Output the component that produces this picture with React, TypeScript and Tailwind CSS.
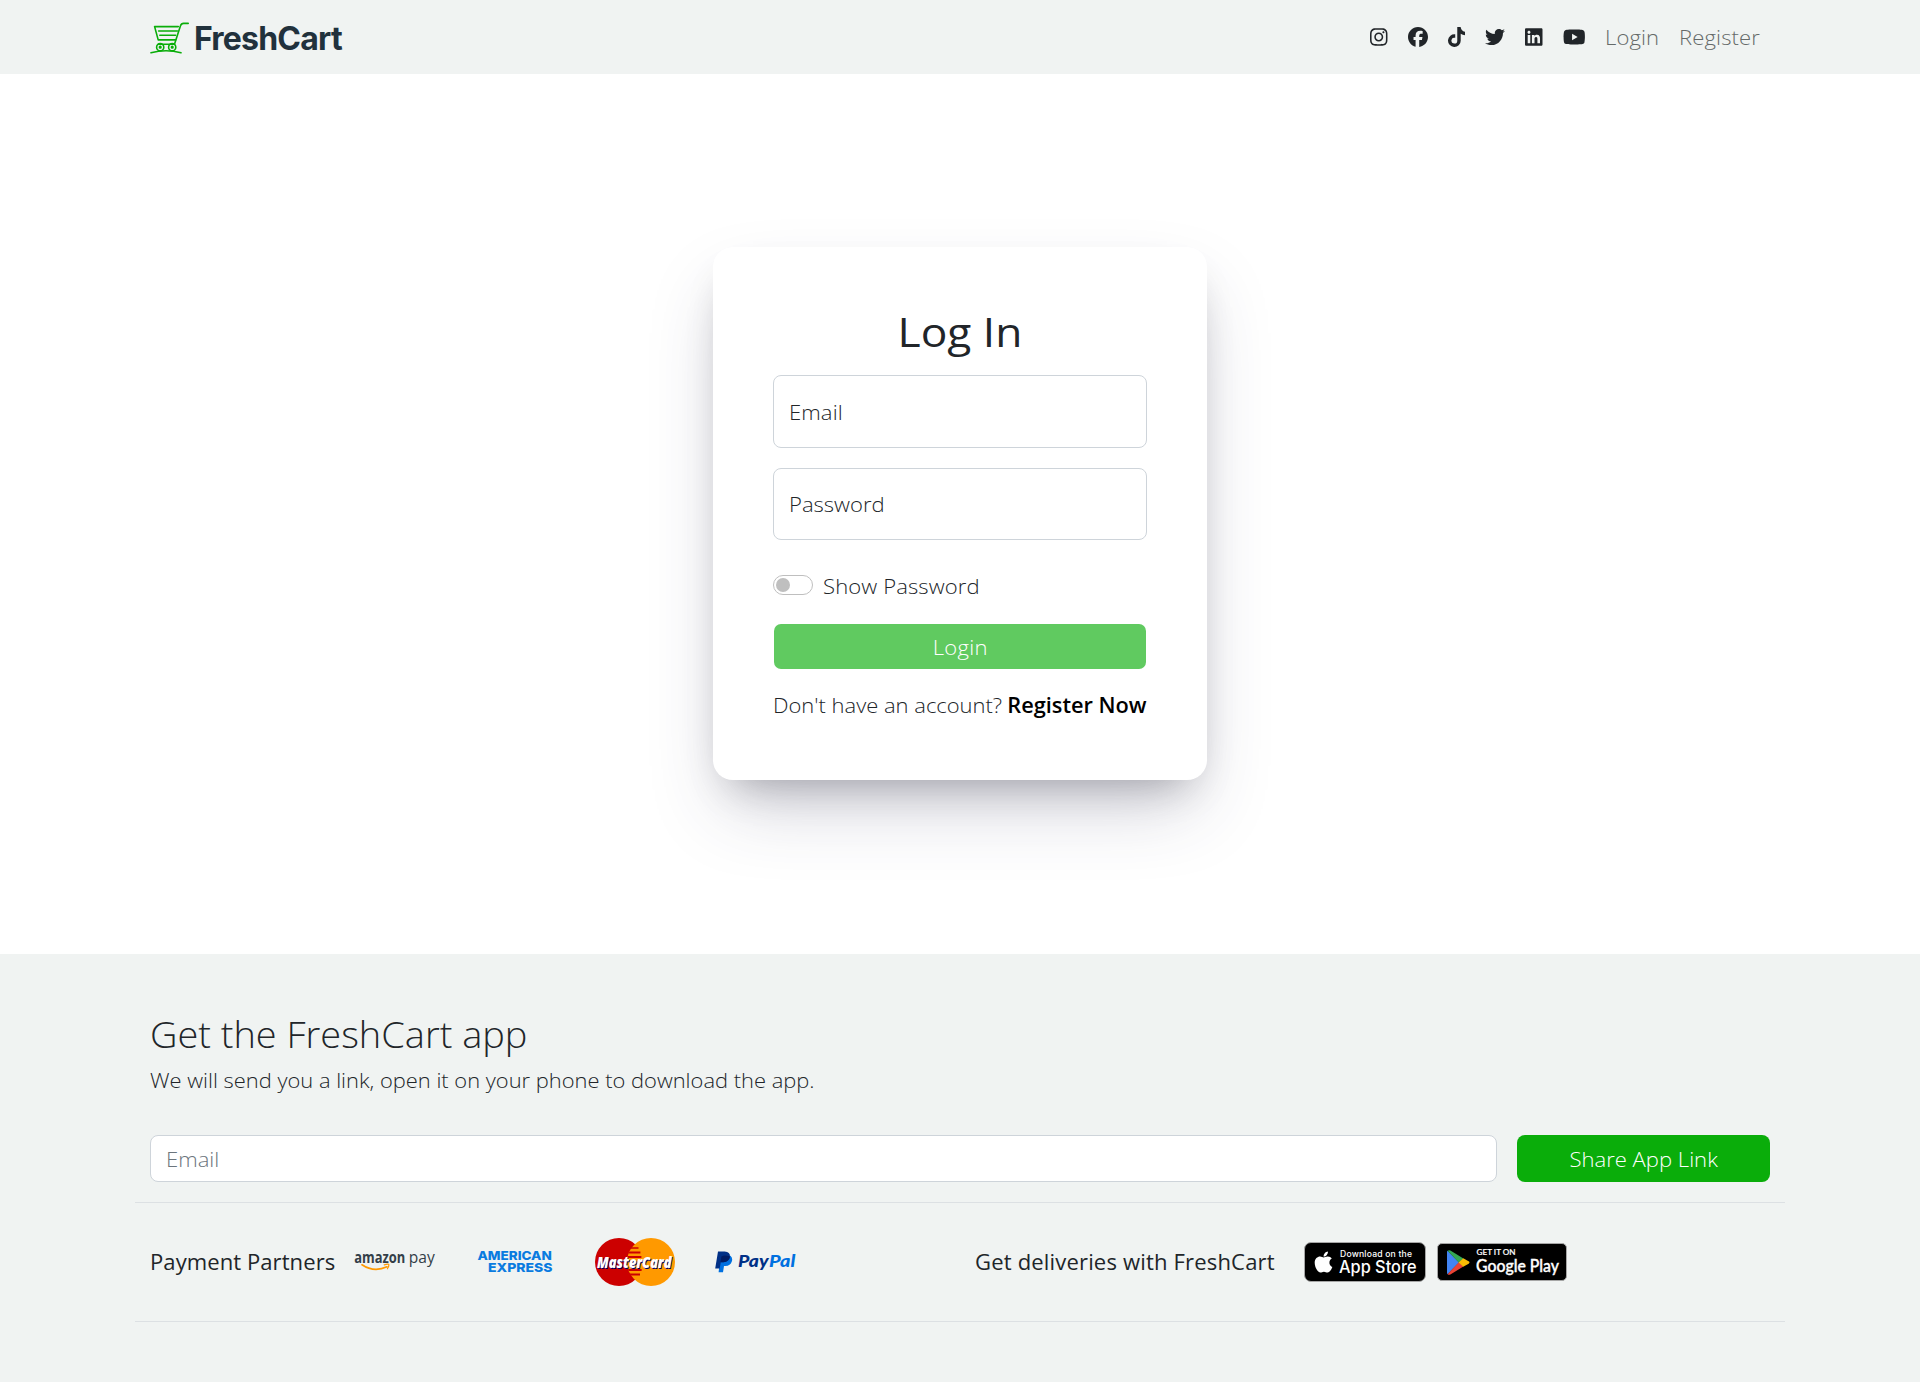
import { FaApple, FaFacebook, FaInstagram, FaLinkedin, FaTiktok, FaTwitter, FaYoutube } from "react-icons/fa6";

function FreshCartLogo() {
  return (
    <svg className="h-[37px] w-[195px] overflow-visible" viewBox="0 0 195 37" role="img" aria-label="FreshCart">
      <g fill="none" stroke="#0aad0a" strokeWidth="1.6" strokeLinecap="round" strokeLinejoin="round">
        <path d="M38.2 4.4 H33.6 Q31.2 4.4 30.5 6.8 L24.8 24.2" />
        <path d="M28.3 7.6 H4.6 L8.2 20.9 H25.6" />
        <path d="M8.6 11.9 H27.4 M9.8 16.2 H25.6" strokeWidth="1.5" />
        <path d="M8.4 25.2 H24.5" />
        <path d="M1 33.8 Q16 29.8 31 33.8" />
        <circle cx="10.2" cy="28.2" r="3.6" />
        <circle cx="22.2" cy="28.2" r="3.6" />
        <circle cx="10.2" cy="28.2" r="0.8" />
        <circle cx="22.2" cy="28.2" r="0.8" />
      </g>
      <text x="44" y="31.2" fontFamily="Inter, sans-serif" fontWeight="700" fontSize="32" fill="#21313c" textLength="148.6" lengthAdjust="spacing">
        FreshCart
      </text>
    </svg>
  );
}

function AmazonPay() {
  return (
    <svg className="h-6 w-[82px] overflow-visible" viewBox="0 0 82 24" fill="#333e48">
      <text x="0.3" y="13.4" fontFamily="'Open Sans', sans-serif" fontWeight="700" fontSize="16.4" textLength="51" lengthAdjust="spacingAndGlyphs">amazon</text>
      <text x="54.8" y="13.4" fontFamily="'Open Sans', sans-serif" fontWeight="400" fontSize="17" textLength="26" lengthAdjust="spacingAndGlyphs">pay</text>
      <path d="M8 14.8 Q20 22.8 33 16.8" fill="none" stroke="#f90" strokeWidth="1.7" strokeLinecap="round" />
      <path d="M30.2 14.8 Q34.8 13.6 34.9 14.8 Q35 16.2 33.4 18.8" fill="none" stroke="#f90" strokeWidth="1.2" strokeLinecap="round" />
    </svg>
  );
}

function AmericanExpress() {
  return (
    <svg className="h-6 w-[76px] overflow-visible" viewBox="0 0 76 24" fill="#0a7be0">
      <text x="0.4" y="10.4" fontFamily="Inter, sans-serif" fontWeight="800" fontSize="12.2" textLength="74.4" lengthAdjust="spacingAndGlyphs">AMERICAN</text>
      <text x="11" y="21.6" fontFamily="Inter, sans-serif" fontWeight="800" fontSize="12.2" textLength="64.5" lengthAdjust="spacingAndGlyphs">EXPRESS</text>
    </svg>
  );
}

function MasterCard() {
  return (
    <svg className="h-12 w-20 overflow-visible" viewBox="0 0 80 48">
      <circle cx="24" cy="24" r="24" fill="#c00" />
      <circle cx="56" cy="24" r="24" fill="#f90" />
      <path d="M36.5 9.2 h7 v1.6 h-8.6z M34.4 13.4 h11 v2 h-12z M33 18 h13.4 v2 h-14z M33 31 h13.6 v2 h-13z M34.6 35.6 h10.4 v1.8 h-9.4z" fill="#c00" />
      <text
        x="2"
        y="30"
        fill="#fff"
        fontFamily="'Open Sans', sans-serif"
        fontWeight="800"
        fontStyle="italic"
        fontSize="16.6"
        textLength="74.5"
        lengthAdjust="spacingAndGlyphs"
        className="[text-shadow:1px_1px_0_#000066]"
      >
        MasterCard
      </text>
    </svg>
  );
}

function PayPal() {
  return (
    <svg className="h-[22px] w-[82px] overflow-visible" viewBox="0 0 82 22">
      <path d="M5.2 7 L15.5 4.8 Q18 7 16.8 10.6 Q15.4 15 10.4 15 H9 L8 21.3 H3.6z" fill="#0070e0" />
      <path d="M3 0.5 H9.6 Q15.3 0.8 15 5.6 Q14.2 11 8.4 11.2 H5.8 L4.7 17.4 H0.2z" fill="#003087" />
      <path d="M6.4 5.4 Q9.8 3.6 15 5.6 Q14.2 11 8.4 11.2 H5.5z" fill="#001c64" />
      <g fontFamily="Lato, sans-serif" fontWeight="900" fontStyle="italic" fontSize="17.2">
        <text x="23" y="16.4" fill="#003087" textLength="30.5" lengthAdjust="spacingAndGlyphs">Pay</text>
        <text x="54" y="16.4" fill="#0070e0" textLength="26.3" lengthAdjust="spacingAndGlyphs">Pal</text>
      </g>
    </svg>
  );
}

function AppStoreBadge() {
  return (
    <div className="flex h-10 w-[122px] items-center rounded-[7px] border border-[#a6a6a6] bg-black">
      <FaApple className="ml-2 h-[24px] w-[21px] text-white" />
      <svg className="ml-[5px] h-[38px] w-[82px] overflow-visible" viewBox="0 0 82 38" fill="#fff" fontFamily="Inter, sans-serif">
        <text x="1" y="13.6" fontSize="8.6" fontWeight="500" textLength="72" lengthAdjust="spacing">Download on the</text>
        <text x="0" y="30" fontSize="17.2" fontWeight="500" textLength="77.5" lengthAdjust="spacingAndGlyphs">App Store</text>
      </svg>
    </div>
  );
}

function GooglePlayBadge() {
  return (
    <div className="flex h-[38px] w-[130px] items-center rounded-[5px] border border-[#a6a6a6] bg-black">
      <svg className="ml-[9px] h-[25px] w-[23px]" viewBox="0 0 23 25">
        <path d="M0.6 0.8 L12 12.4 L0.6 24.2 Q0 23.6 0 22.8 V2 Q0 1.2 0.6 0.8z" fill="#4285f4" />
        <path d="M0.6 0.8 Q1.8 -0.4 3.4 0.6 L16.4 8.4 L11.8 12.6z" fill="#34a853" />
        <path d="M0.6 24.2 Q1.8 25.4 3.4 24.4 L16.4 16.6 L11.8 12.2z" fill="#ea4335" />
        <path d="M16.2 8.2 L21.6 11.3 Q23.4 12.5 21.6 13.7 L16.2 16.8 L11.6 12.5z" fill="#fbbc04" />
      </svg>
      <svg className="ml-[6px] h-9 w-[86px] overflow-visible" viewBox="0 0 86 36" fill="#fff">
        <text x="0.6" y="11.2" fontFamily="Lato, sans-serif" fontSize="8.4" stroke="#fff" strokeWidth="0.2" textLength="39" lengthAdjust="spacingAndGlyphs">GET IT ON</text>
        <text x="0" y="28" fontFamily="Lato, sans-serif" fontSize="17.4" stroke="#fff" strokeWidth="0.4" textLength="83" lengthAdjust="spacingAndGlyphs">Google Play</text>
      </svg>
    </div>
  );
}

function Navbar() {
  return (
    <nav className="h-[74px] bg-[#f0f3f2]">
      <div className="mx-auto flex h-full w-[1620px] items-center justify-between">
        <FreshCartLogo />
        <div className="flex items-center gap-5 pr-[10px]">
          <FaInstagram className="h-5 w-[17.5px]" />
          <FaFacebook className="h-5 w-5" />
          <FaTiktok className="h-5 w-[17.5px]" />
          <FaTwitter className="h-5 w-5" />
          <FaLinkedin className="h-5 w-[17.5px]" />
          <FaYoutube className="h-5 w-[22.5px]" />
          <a className="w-[54px] origin-left scale-x-[1.05] tracking-[0.1px] whitespace-nowrap text-[#656a69]">Login</a>
          <a className="w-[81px] origin-left scale-x-[1.05] tracking-[0.13px] whitespace-nowrap text-[#656a69]">Register</a>
        </div>
      </div>
    </nav>
  );
}

function LoginCard() {
  return (
    <div className="mt-[173px] h-[533px] w-[494px] rounded-[20px] bg-white p-[60px] shadow-[0_36px_74px_-14px_rgba(50,50,93,0.25),0_20px_40px_-20px_rgba(0,0,0,0.3)]">
      <h1 className="scale-x-[1.08] text-center text-[41px] leading-[49px] font-normal">Log In</h1>
      <div className="mt-[19px] flex h-[73px] items-center rounded-lg border border-[#ced4da] px-[15px]">
        <label className="origin-left scale-x-[1.05] tracking-[0.1px]">Email</label>
      </div>
      <div className="mt-5 flex h-[72px] items-center rounded-lg border border-[#ced4da] px-[15px]">
        <label className="origin-left scale-x-[1.05]">Password</label>
      </div>
      <div className="mt-[31px] flex h-[30px] gap-[10px]">
        <span className="mt-1 flex h-5 w-10 items-center rounded-full border border-[#bfbfbf] px-[2px]">
          <span className="h-[14px] w-[14px] rounded-full bg-[#bfbfbf]" />
        </span>
        <span className="origin-left scale-x-[1.05] tracking-[0.1px]">Show Password</span>
      </div>
      <button className="mx-px mt-[23px] flex h-[45px] w-[372px] items-center justify-center rounded-[7px] bg-[#60ca60] text-white">
        <span className="scale-x-[1.05] tracking-[0.3px]">Login</span>
      </button>
      <p className="mt-[21px] flex justify-between whitespace-nowrap">
        <span className="origin-left scale-x-[1.045]">Don't have an account?</span>
        <a className="origin-right scale-x-[1.035] font-semibold text-black">Register Now</a>
      </p>
    </div>
  );
}

function Footer() {
  return (
    <footer className="h-[428px] bg-[#f0f3f2] pt-[58px]">
      <div className="mx-auto w-[1650px]">
        <div className="px-[15px]">
          <h2 className="origin-left scale-x-[1.025] text-[37px] leading-[44px] font-light">Get the FreshCart app</h2>
          <p className="mt-[9px] origin-left scale-x-[1.042]">We will send you a link, open it on your phone to download the app.</p>
          <div className="mt-10 flex h-[47px] gap-5">
            <div className="flex flex-1 items-center rounded-lg border border-[#ced4da] bg-white px-[15px] text-[#6c757d]">
              <span className="origin-left scale-x-[1.05]">Email</span>
            </div>
            <button className="flex w-[253px] items-center justify-center rounded-lg bg-[#0aad0a] text-white">
              <span className="scale-x-[1.05]">Share App Link</span>
            </button>
          </div>
        </div>
        <div className="mt-5 flex h-[120px] items-center border-y border-[#dce0e3]">
          <div className="flex w-[825px] items-center pl-[14.5px] font-medium">
            <span className="mr-[4.5px] w-[200px] origin-left scale-x-[1.05] tracking-[0.06px] whitespace-nowrap">Payment Partners</span>
            <AmazonPay />
            <div className="ml-[41px]"><AmericanExpress /></div>
            <div className="ml-[42px]"><MasterCard /></div>
            <div className="ml-[39.5px]"><PayPal /></div>
          </div>
          <div className="flex items-center pl-[15px] font-medium">
            <span className="mr-[9px] w-[320px] origin-left scale-x-[1.05] tracking-[0.15px] whitespace-nowrap">Get deliveries with FreshCart</span>
            <AppStoreBadge />
            <div className="ml-[11px]"><GooglePlayBadge /></div>
          </div>
        </div>
      </div>
    </footer>
  );
}

export default function App() {
  return (
    <div className="min-h-[1382px] bg-white font-['Open_Sans',sans-serif] text-[21px] leading-[30px] font-light text-[#212529]">
      <Navbar />
      <main className="flex h-[880px] justify-center overflow-hidden">
        <LoginCard />
      </main>
      <Footer />
    </div>
  );
}
